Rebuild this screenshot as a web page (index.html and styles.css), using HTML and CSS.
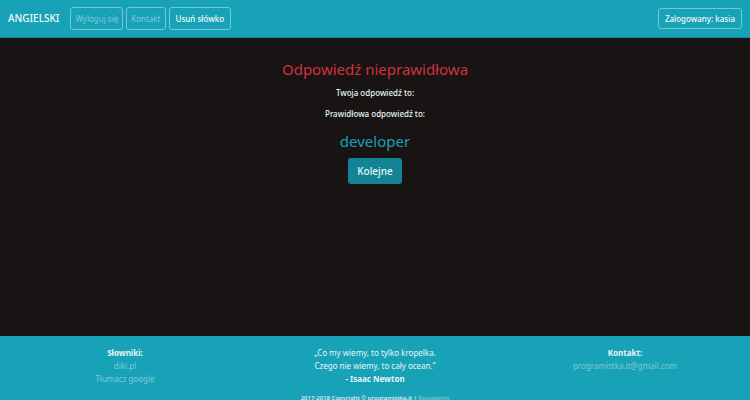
FILE: index.html
```html
<!DOCTYPE html>
<html lang="pl">
<head>
<meta charset="utf-8">
<meta name="viewport" content="width=device-width, initial-scale=1">
<title>Angielski</title>
<link rel="stylesheet" href="styles.css">
</head>
<body>
<header class="navbar">
  <a class="brand" href="#">ANGIELSKI</a>
  <nav class="nav">
    <a class="nav-link" href="#">Wyloguj się</a>
    <a class="nav-link" href="#">Kontakt</a>
    <button class="nav-button" type="button">Usuń słówko</button>
  </nav>
  <button class="nav-button user" type="button">Zalogowany: kasia</button>
</header>
<main class="content">
  <h1 class="result">Odpowiedź nieprawidłowa</h1>
  <p class="label">Twoja odpowiedź to:</p>
  <p class="label">Prawidłowa odpowiedź to:</p>
  <h2 class="answer">developer</h2>
  <button class="next" type="button">Kolejne</button>
</main>
<footer class="footer">
  <div class="columns">
    <div>
      <strong>Słowniki:</strong><br>
      <a href="#">diki.pl</a><br>
      <a href="#">Tłumacz google</a>
    </div>
    <div>
      „Co my wiemy, to tylko kropelka.<br>
      Czego nie wiemy, to cały ocean.”<br>
      <strong>- Isaac Newton</strong>
    </div>
    <div>
      <strong>Kontakt:</strong><br>
      <a href="mailto:programistka.it@gmail.com">programistka.it@gmail.com</a>
    </div>
  </div>
  <p class="copyright">2017-2018 Copyright © programistka.it | <a href="#">Regulamin</a></p>
</footer>
</body>
</html>
```
FILE: styles.css
```css
* {
  box-sizing: border-box;
}

body {
  margin: 0;
  height: 100vh;
  overflow: hidden;
  background: #191414;
  color: #e8f4f6;
  font-family: "Noto Sans", "Open Sans", sans-serif;
  font-size: 8px;
  line-height: 13px;
  text-align: center;
}

a {
  color: #80c9d6;
  text-decoration: none;
}

.navbar {
  display: flex;
  align-items: center;
  height: 38px;
  padding: 0 8px;
  background: #17a2b8;
  border-bottom: 1px solid #138496;
}

.brand {
  margin-right: 11px;
  color: #f4fafb;
  font-size: 10px;
  font-weight: 500;
}

.nav {
  display: flex;
  gap: 3px;
}

.nav-link,
.nav-button {
  height: 23px;
  padding: 0 4px;
  border: 1px solid #74c7d4;
  border-radius: 3px;
  line-height: 21px;
}

.nav-button {
  padding: 0 6px;
  background: transparent;
  color: #f4fafb;
  font-family: inherit;
  font-size: 8px;
  font-weight: 500;
}

.user {
  height: 21px;
  margin-left: auto;
  line-height: 19px;
}

.content {
  min-height: 298px;
  padding-top: 21px;
}

.result,
.answer {
  margin: 0;
  font-size: 15px;
  font-weight: 400;
  line-height: 20px;
}

.result {
  margin-bottom: 7px;
  color: #d32f40;
}

.label {
  margin: 0 0 8px;
  font-weight: 500;
}

.answer {
  margin: 11px 0 7px;
  color: #17a2b8;
}

.next {
  height: 26px;
  padding: 0 9px;
  border: 0;
  border-radius: 3px;
  background: #138496;
  color: #e8f4f6;
  font-family: inherit;
  font-size: 10px;
  font-weight: 500;
}

.footer {
  padding-top: 10px;
  background: #17a2b8;
}

.columns {
  display: grid;
  grid-template-columns: repeat(3, 1fr);
}

.copyright {
  margin: 0;
  padding: 7px 0;
  font-size: 6px;
  font-weight: 500;
}
```
